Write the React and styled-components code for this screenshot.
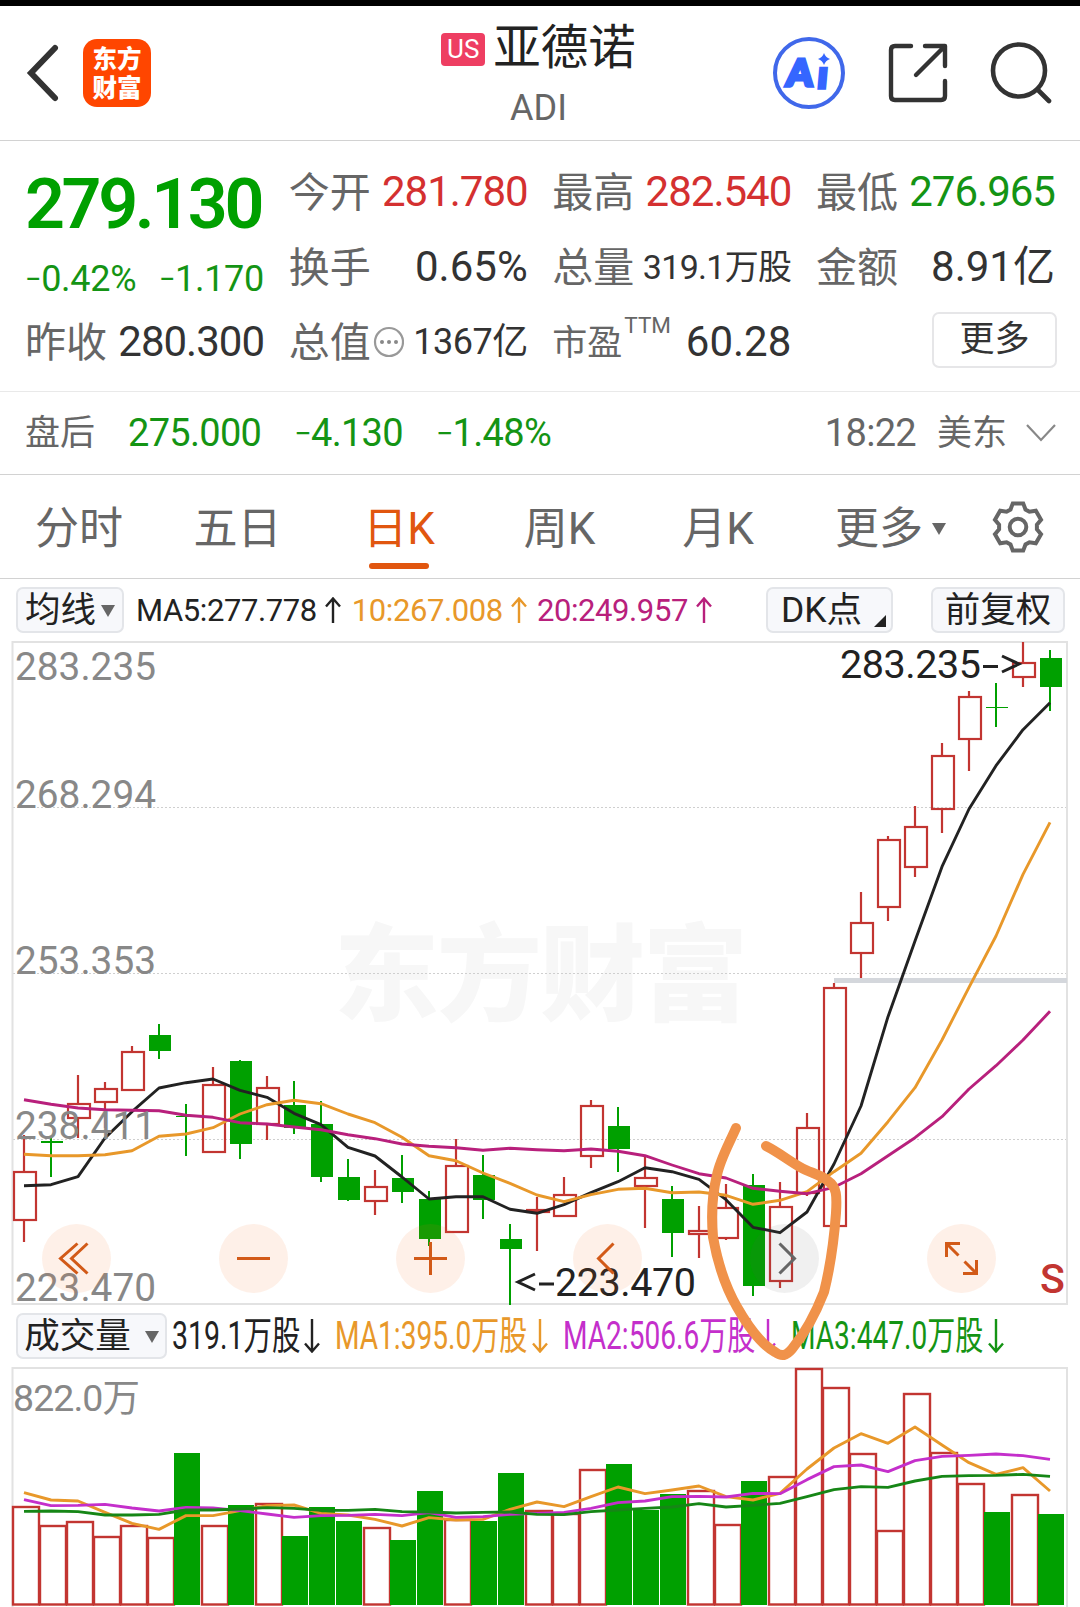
import React from 'react';
import styled, { createGlobalStyle } from 'styled-components';

const FONT = `Roboto, "Noto Sans CJK SC", sans-serif`;
const RED = '#c23531';
const GREEN = '#00a000';
const ORANGE = '#e8982a';
const MAGENTA = '#b8207c';
const PURPLE = '#c42fcb';

const GlobalStyle = createGlobalStyle`
    * { box-sizing: border-box; }
    body {
        margin: 0;
        background: #fff;
        overflow: hidden;
        font-family: ${FONT};
    }
    svg { display: block; flex: none; }
`;

const Page = styled.div`
    width: 1080px;
    height: 1607px;
    overflow: hidden;
    background: #fff;
    border-top: 6px solid #000;
    line-height: 1;
    white-space: nowrap;
`;

const Header = styled.header`
    height: 135px;
    border-bottom: 1px solid #d2d2d2;
    display: grid;
    grid-template-columns: 330px 1fr 330px;
`;

const HeaderLeft = styled.div`
    display: flex;
    align-items: center;
    padding-left: 23px;
    gap: 22px;
`;

const Logo = styled.div`
    width: 68px;
    height: 68px;
    border-radius: 14px;
    background: #ff4600;
    color: #fff;
    font: 900 24.5px/29px "Noto Sans CJK SC", sans-serif;
    text-align: center;
    padding-top: 4px;
`;

const HeaderTitle = styled.div`
    display: flex;
    flex-direction: column;
    align-items: center;
    padding: 19px 3px 0 0;
`;

const NameRow = styled.div`
    display: flex;
    align-items: center;
    gap: 8px;
    height: 48px;
    font-size: 47.5px;
    color: #222;
`;

const Market = styled.span`
    width: 44px;
    height: 33px;
    border-radius: 4px;
    background: #ee3e62;
    color: #fff;
    font-size: 26px;
    line-height: 33px;
    text-align: center;
`;

const Ticker = styled.div`
    margin-top: 17px;
    font-size: 36px;
    color: #666;
`;

const HeaderRight = styled.div`
    display: flex;
    align-items: center;
    justify-content: flex-end;
    padding-right: 28px;
    gap: 42px;
`;

const Quote = styled.section`
    height: 251px;
    padding: 13px 25px 0;
    border-bottom: 1px solid #e9e9e9;
    display: flex;
    justify-content: space-between;
`;

const QuoteColumn = styled.div`
    width: 239px;
`;

const Price = styled.div`
    height: 99px;
    display: flex;
    align-items: center;
    font-size: 70px;
    font-weight: 600;
    letter-spacing: -3.4px;
    color: ${GREEN};
`;

const Change = styled.div`
    height: 51px;
    display: flex;
    align-items: center;
    justify-content: space-between;
    font-size: 36px;
    letter-spacing: -0.3px;
    color: #149414;
`;

const Minus = styled.span`
    font-size: 0.8em;
    vertical-align: 0.06em;
`;

const Cell = styled.div`
    height: 75px;
    display: flex;
    align-items: center;
    justify-content: space-between;
`;

const Label = styled.span`
    display: flex;
    align-items: center;
    padding-top: 4px;
    font-size: ${props => props.$size || 41}px;
    color: #666;
`;

const Value = styled.span`
    font-size: ${props => props.$size || 42}px;
    letter-spacing: ${props => props.$spacing ?? -1}px;
    color: ${props => props.$color || '#333'};
`;

const Ttm = styled.sup`
    align-self: flex-start;
    font-size: 22.5px;
    line-height: 24px;
    margin: -13px 0 0 2px;
`;

const MoreButton = styled.button`
    width: 125px;
    height: 56px;
    margin: -4px -2px 0 auto;
    padding: 0;
    border: 2px solid #e6e6e8;
    border-radius: 7px;
    background: #fff;
    font: 35px/1 ${FONT};
    color: #333;
`;

const AfterHours = styled.section`
    height: 83px;
    padding: 0 24px 0 25px;
    border-bottom: 1px solid #d2d2d2;
    display: flex;
    align-items: center;
    font-size: 38px;
    letter-spacing: -0.7px;
    color: #149414;
`;

const Figure = styled.span`
    margin-left: 33px;
`;

const Muted = styled.span`
    font-size: 35px;
    letter-spacing: 0;
    color: #666;
`;

const Clock = styled.span`
    margin: 0 21px 0 auto;
    color: #666;
`;

const Tabs = styled.nav`
    height: 104px;
    border-bottom: 1px solid #d2d2d2;
    display: grid;
    grid-template-columns: 158px 159px 164px 157px 160px 193px 1fr;
`;

const Tab = styled.div`
    display: flex;
    flex-direction: column;
    align-items: center;
    padding-top: 32px;
    font-size: 44px;
    color: ${props => props.$active ? '#e1560f' : '#666'};
    &::after {
        content: '';
        width: 60px;
        height: 6px;
        margin-top: 12px;
        border-radius: 3px;
        background: ${props => props.$active ? '#e1560f' : 'transparent'};
    }
`;

const TabInner = styled.span`
    display: flex;
    align-items: center;
    gap: 9px;
    margin-left: -8px;
`;

const Triangle = styled.i`
    border: solid transparent;
    border-width: 12px 7.5px 0;
    border-top-color: #666;
`;

const IndicatorBar = styled.div`
    height: 62px;
    padding: 0 15px 0 16px;
    display: flex;
    align-items: center;
`;

const Chip = styled.button`
    position: relative;
    width: ${props => props.$width}px;
    height: 46px;
    padding: 2px ${props => props.$corner ? 16 : 0}px 0 0;
    border: 2px solid #e3e5e9;
    border-radius: 7px;
    background: #f7f8fb;
    display: flex;
    align-items: center;
    justify-content: center;
    gap: ${props => props.$gap || 5}px;
    flex: none;
    font: 35.5px/1 ${FONT};
    color: #222;
    &:nth-last-of-type(2) {
        margin-left: auto;
        margin-right: 38px;
    }
`;

const Corner = styled.i`
    position: absolute;
    right: 5px;
    bottom: 4px;
    width: 12px;
    height: 12px;
    background: #222;
    clip-path: polygon(100% 0, 100% 100%, 0 100%);
`;

const Legend = styled.span`
    display: flex;
    align-items: center;
    gap: 8px;
    margin-left: ${props => props.$left}px;
    font-size: 31px;
    letter-spacing: -0.4px;
    color: ${props => props.$color};
`;

const ChartArea = styled.div`
    position: relative;
`;

const Controls = styled.div`
    position: absolute;
    left: 42px;
    top: 583px;
    display: flex;
    gap: 108px;
`;

const Control = styled.button`
    width: 69px;
    height: 69px;
    padding: 0;
    border: 0;
    border-radius: 50%;
    background: ${props => props.$muted ? 'rgba(90, 90, 90, .09)' : 'rgba(250, 105, 30, .1)'};
    color: ${props => props.$muted ? '#666' : '#d25a18'};
`;

const VolumeBar = styled.div`
    height: 62px;
    padding: 0 0 0 16px;
    display: flex;
    align-items: center;
`;

const VolumeLegend = styled.span`
    display: flex;
    align-items: center;
    justify-content: space-between;
    width: ${props => props.$width}px;
    margin-left: ${props => props.$left}px;
    color: ${props => props.$color};
`;

// the legend has to fit four figures on one line, so its glyphs are narrowed
const Narrow = styled.span`
    width: 0;
    font-size: 39px;
    transform: scaleX(${props => props.$scale});
    transform-origin: left;
`;

const Annotation = styled.svg`
    position: absolute;
    left: 0;
    top: 0;
    pointer-events: none;
`;

const STEP = 27;
const FIRST = 24;
const TOP = 642;

// [up, high, body top, body bottom, low]
const candles = [
    [1, 1135, 1172, 1220, 1242], [0, 1137, 1141, 1143, 1177], [1, 1075, 1104, 1118, 1138],
    [1, 1082, 1089, 1102, 1128], [1, 1046, 1052, 1090, 1090], [0, 1024, 1035, 1051, 1059],
    [0, 1104, 1116, 1117, 1156], [1, 1067, 1085, 1152, 1152], [0, 1060, 1061, 1144, 1159],
    [1, 1076, 1088, 1124, 1140], [0, 1081, 1105, 1128, 1134], [0, 1101, 1124, 1177, 1182],
    [0, 1159, 1177, 1200, 1201], [1, 1170, 1187, 1201, 1215], [0, 1155, 1178, 1192, 1203],
    [0, 1191, 1199, 1239, 1246], [1, 1139, 1166, 1232, 1232], [0, 1155, 1175, 1200, 1219],
    [0, 1224, 1239, 1249, 1305], [1, 1197, 1210, 1212, 1251], [1, 1177, 1195, 1216, 1216],
    [1, 1100, 1106, 1156, 1168], [0, 1107, 1126, 1149, 1172], [1, 1156, 1178, 1186, 1228],
    [0, 1186, 1199, 1233, 1257], [1, 1206, 1231, 1234, 1258], [1, 1184, 1208, 1238, 1240],
    [0, 1174, 1185, 1286, 1296], [1, 1182, 1207, 1281, 1288], [1, 1113, 1128, 1193, 1196],
    [1, 983, 988, 1226, 1226], [1, 892, 923, 953, 978], [1, 836, 840, 907, 921],
    [1, 806, 827, 867, 877], [1, 743, 756, 809, 833], [1, 691, 697, 739, 771],
    [0, 683, 707, 708, 727], [1, 642, 663, 677, 687], [0, 650, 658, 687, 711],
];

const ma5 = [1185.7, 1184.7, 1176.7, 1138, 1111.7, 1088, 1082.7, 1079, 1090.3, 1097.3, 1113.3, 1124.7, 1147.3,
    1156, 1177, 1199, 1196.7, 1196.7, 1209.3, 1213.3, 1204.7, 1192.7, 1181.7, 1167.7, 1171.7, 1179.3,
    1199.7, 1227.3, 1232.7, 1212, 1164, 1106, 1016.7, 941, 866.7, 809, 765.7, 729.7, 702.7];
const ma10 = [1154.3, 1155.7, 1155.7, 1154.7, 1150.7, 1136.3, 1134, 1127.7, 1114, 1104.7, 1100.3, 1103.7, 1114,
    1122.7, 1137.3, 1155.7, 1160.7, 1173, 1183.3, 1195, 1201.7, 1194.7, 1189.3, 1188.3, 1192.7, 1192,
    1195.3, 1204.3, 1200.3, 1191.7, 1171.7, 1153.3, 1121.7, 1087.7, 1040, 987.3, 936, 874.3, 822.3];
const ma20 = [1099.7, 1104.3, 1108, 1109.7, 1110.3, 1110.7, 1115.3, 1117.3, 1122.7, 1124, 1127, 1129.7, 1134.7,
    1138.7, 1144, 1146.3, 1147.7, 1150.3, 1148.3, 1149.7, 1150.7, 1149, 1151.3, 1155.7, 1165, 1173.7,
    1178, 1188.3, 1191.3, 1193.7, 1187.3, 1173.7, 1155.7, 1137.7, 1116.7, 1089, 1065.7, 1040, 1011.3];

// [up, top]
const volumes = [
    [1, 1507], [1, 1526], [1, 1522], [1, 1537], [1, 1526], [1, 1538], [0, 1453], [1, 1526], [0, 1505],
    [1, 1504], [0, 1536], [0, 1507], [0, 1521], [1, 1528], [0, 1540], [0, 1491], [1, 1520], [0, 1521],
    [0, 1473], [1, 1511], [1, 1514], [1, 1470], [0, 1464], [0, 1510], [0, 1494], [1, 1491], [1, 1525],
    [0, 1481], [1, 1477], [1, 1369], [1, 1388], [1, 1454], [1, 1531], [1, 1394], [1, 1453], [1, 1484],
    [0, 1512], [1, 1495], [0, 1514],
];

const volMa1 = [578, 600, 603, 637, 670, 688, 647, 647, 632, 617, 615, 640, 645, 658, 678, 653, 660, 658, 628,
    606, 620, 590, 561, 581, 570, 558, 590, 600, 580, 507, 444, 401, 430, 381, 435, 488, 523, 503, 573];
const volMa2 = [599, 617, 616, 613, 624, 633, 622, 624, 632, 642, 652, 647, 646, 643, 647, 638, 652, 650, 643,
    640, 637, 625, 608, 603, 590, 589, 591, 580, 581, 539, 500, 495, 515, 482, 469, 466, 462, 467, 478];
const volMa3 = [634, 633, 635, 645, 645, 643, 630, 630, 627, 623, 625, 631, 631, 628, 635, 636, 639, 637, 636,
    643, 644, 635, 630, 625, 621, 611, 621, 616, 610, 590, 569, 560, 562, 543, 529, 527, 526, 523, 529];

const toLine = values => values.map((y, i) => `${FIRST + i * STEP},${y}`).join(' ');
const toVolumeLine = values => toLine(values.map(v => 1300 + v / 3));

const Line = ({ points, color }) => (
    <polyline points={points} fill="none" stroke={color} strokeWidth="2.9" strokeLinejoin="round" />
);

const Candle = ({ index, data }) => {
    const [up, high, top, bottom, low] = data;
    const x = FIRST + index * STEP;
    if (!up) {
        return (
            <g fill={GREEN}>
                <rect x={x - 1} y={high} width="2" height={low - high} />
                <rect x={x - 10} y={top} width="22" height={bottom - top} />
            </g>
        );
    }
    return (
        <g stroke={RED} strokeWidth="2.2" fill="none">
            <path d={`M${x} ${high}V${top}M${x} ${bottom}V${low}`} />
            <rect x={x - 10} y={top} width="22" height={bottom - top} />
        </g>
    );
};

const axis = [['283.235', 680], ['268.294', 808], ['253.353', 974], ['238.411', 1139], ['223.470', 1301]];

const PriceChart = () => (
    <svg width="1080" height="664" viewBox={`0 ${TOP - 1} 1080 664`}>
        <text x="334" y="1012" fontSize="105" fontWeight="900" fill="#f7f7f7" textLength="414"
            fontFamily="Noto Sans CJK SC">东方财富</text>
        <g stroke="#cfcfcf" strokeDasharray="2 2">
            <path d="M13 807.5H1067M13 973.5H1067M13 1139.5H1067" />
        </g>
        <rect x="12.5" y="642" width="1054.5" height="662" fill="none" stroke="#e2e2e2" strokeWidth="2" />
        <rect x="834" y="978" width="233" height="5" fill="#d4d7dc" />
        {candles.map((c, i) => <Candle key={i} index={i} data={c} />)}
        <Line points={toLine(ma5)} color="#222" />
        <Line points={toLine(ma10)} color={ORANGE} />
        <Line points={toLine(ma20)} color={MAGENTA} />
        <g fontSize="39.5" fill="#888">
            {axis.map(([text, y]) => (
                <text key={text} x="15" y={y} textLength="141" lengthAdjust="spacingAndGlyphs">{text}</text>
            ))}
        </g>
        <g fontSize="39.5" fill="#222">
            <text x="840" y="678" textLength="141">283.235</text>
            <text x="555" y="1296" textLength="141">223.470</text>
        </g>
        <g stroke="#222" strokeWidth="3" fill="none">
            <path d="M983 666.5H998M1002 656L1019 664L1002 672" />
            <path d="M554 1284H539M535 1274L518 1282L535 1290" />
        </g>
        <text x="1040" y="1292.5" fontSize="41" fontWeight="500" fill={RED}>S</text>
    </svg>
);

const VolumeChart = () => (
    <svg width="1080" height="240" viewBox="0 1367 1080 240">
        <path d="M12.5 1607V1368H1067V1607" fill="none" stroke="#e2e2e2" strokeWidth="2" />
        <text x="13" y="1411" fontSize="37.5" fill="#888" textLength="127">822.0万</text>
        {volumes.map(([up, top], i) => (up
            ? <rect key={i} x={13 + i * STEP} y={top} width="26" height={1604.5 - top} fill="none" stroke={RED} strokeWidth="2.4" />
            : <rect key={i} x={12 + i * STEP} y={top} width="26" height={1605 - top} fill={GREEN} />
        ))}
        <Line points={toVolumeLine(volMa1)} color={ORANGE} />
        <Line points={toVolumeLine(volMa2)} color={PURPLE} />
        <Line points={toVolumeLine(volMa3)} color="#168616" />
    </svg>
);

const Arrow = ({ down, h = 26 }) => (
    <svg width="16" height={h} viewBox={`0 0 16 ${h}`} fill="none" stroke="currentColor" strokeWidth="2.4"
        transform={down ? 'rotate(180)' : undefined}>
        <path d={`M8 ${h}V1.5M1 9.5L8 1.5L15 9.5`} />
    </svg>
);

const controls = [
    'M1 -15L-16 0L1 15M11 -15L-5 0L11 15',
    'M-16.5 0H16.5',
    'M-16.5 0H16.5M0 -16.5V16.5',
    'M6 -15L-9 0L6 15',
    'M-5 -15L10 0L-5 15',
    'M-1.5 -15H-15V-1.5M-15 -15L-3 -3M15 1.5V15H1.5M3 3L15 15',
];

const gearPoints = [0, 60, 120, 180, 240, 300].flatMap(deg => {
    const a = deg * Math.PI / 180;
    return [[-7.5, -17.5], [-5.2, -23.6], [5.2, -23.6], [7.5, -17.5]].map(([x, y]) =>
        `${(x * Math.cos(a) - y * Math.sin(a)).toFixed(2)},${(x * Math.sin(a) + y * Math.cos(a)).toFixed(2)}`);
}).join(' ');

const App = () => (
    <Page>
        <GlobalStyle />
        <Header>
            <HeaderLeft>
                <svg width="38" height="60" viewBox="0 0 38 60" fill="none" stroke="#333" strokeWidth="6" strokeLinecap="round">
                    <path d="M32 5L8 30L32 55" />
                </svg>
                <Logo>东方<br />财富</Logo>
            </HeaderLeft>
            <HeaderTitle>
                <NameRow><Market>US</Market>亚德诺</NameRow>
                <Ticker>ADI</Ticker>
            </HeaderTitle>
            <HeaderRight>
                <svg width="74" height="74" viewBox="-37 -37 74 74">
                    <circle r="34" fill="none" stroke="#4068ea" strokeWidth="4" />
                    <g fill="#3566ff" fontFamily="Lato" fontWeight="900" stroke="#3566ff" strokeWidth="3.5" transform="skewX(-5)">
                        <text x="-22" y="13" fontSize="37">A</text>
                        <text x="9" y="15" fontSize="38">ı</text>
                    </g>
                    <path d="M15 -20Q16.5 -15.5 21 -14Q16.5 -12.5 15 -8Q13.5 -12.5 9 -14Q13.5 -15.5 15 -20Z" fill="#3566ff" />
                </svg>
                <svg width="60" height="60" viewBox="0 0 60 60" fill="none" stroke="#333" strokeWidth="4.4" strokeLinecap="round" strokeLinejoin="round">
                    <path d="M23 3H7Q3 3 3 7V53Q3 57 7 57H53Q57 57 57 53V38M37 3H57V23M28 32L56 4" />
                </svg>
                <svg width="62" height="62" viewBox="0 0 62 62" fill="none" stroke="#333" strokeWidth="4.6" strokeLinecap="round">
                    <circle cx="29" cy="28.5" r="26" />
                    <path d="M47.5 47.5L59 59" />
                </svg>
            </HeaderRight>
        </Header>

        <Quote>
            <QuoteColumn>
                <Price>279.130</Price>
                <Change>
                    <span><Minus>−</Minus>0.42%</span>
                    <span><Minus>−</Minus>1.170</span>
                </Change>
                <Cell><Label>昨收</Label><Value>280.300</Value></Cell>
            </QuoteColumn>
            <QuoteColumn>
                <Cell><Label>今开</Label><Value $color="#d43030">281.780</Value></Cell>
                <Cell><Label>换手</Label><Value $spacing={0}>0.65%</Value></Cell>
                <Cell>
                    <Label>
                        总值
                        <svg width="33" height="36" viewBox="-18 -16 33 36">
                            <circle r="14" fill="none" stroke="#999" strokeWidth="2.2" />
                            <g fill="#888"><circle cx="-7" r="2" /><circle r="2" /><circle cx="7" r="2" /></g>
                        </svg>
                    </Label>
                    <Value $size={36} $spacing={-0.5}>1367亿</Value>
                </Cell>
            </QuoteColumn>
            <QuoteColumn>
                <Cell><Label>最高</Label><Value $color="#d43030">282.540</Value></Cell>
                <Cell><Label>总量</Label><Value $size={34} $spacing={-0.7}>319.1万股</Value></Cell>
                <Cell><Label $size="35">市盈<Ttm>TTM</Ttm></Label><Value $spacing={0}>60.28</Value></Cell>
            </QuoteColumn>
            <QuoteColumn>
                <Cell><Label>最低</Label><Value $color="#149414">276.965</Value></Cell>
                <Cell><Label>金额</Label><Value $spacing={0}>8.91亿</Value></Cell>
                <Cell><MoreButton>更多</MoreButton></Cell>
            </QuoteColumn>
        </Quote>

        <AfterHours>
            <Muted>盘后</Muted>
            <Figure>275.000</Figure>
            <Figure><Minus>−</Minus>4.130</Figure>
            <Figure><Minus>−</Minus>1.48%</Figure>
            <Clock>18:22</Clock>
            <Muted>美东</Muted>
            <svg width="30" height="18" viewBox="0 0 30 18" fill="none" stroke="#888" strokeWidth="2.2" style={{ marginLeft: 19 }}>
                <path d="M1 1L15 16L29 1" />
            </svg>
        </AfterHours>

        <Tabs>
            <Tab>分时</Tab>
            <Tab>五日</Tab>
            <Tab $active>日K</Tab>
            <Tab>周K</Tab>
            <Tab>月K</Tab>
            <Tab><TabInner>更多<Triangle /></TabInner></Tab>
            <svg width="54" height="104" viewBox="-27 -52 54 104" fill="none" stroke="#666" strokeWidth="4">
                <polygon points={gearPoints} />
                <circle r="8.3" />
            </svg>
        </Tabs>

        <IndicatorBar>
            <Chip $width={108}>均线<Triangle /></Chip>
            <Legend $left={12} $color="#222">MA5:277.778<Arrow /></Legend>
            <Legend $left={11} $color={ORANGE}>10:267.008<Arrow /></Legend>
            <Legend $left={10} $color={MAGENTA}>20:249.957<Arrow /></Legend>
            <Chip $width={127} $corner>DK点<Corner /></Chip>
            <Chip $width={134}>前复权</Chip>
        </IndicatorBar>

        <ChartArea>
            <PriceChart />
            <Controls>
                {controls.map((d, i) => (
                    <Control key={d} $muted={i === 4}>
                        <svg width="69" height="69" viewBox="-34.5 -34.5 69 69" fill="none" stroke="currentColor" strokeWidth="3">
                            <path d={d} />
                        </svg>
                    </Control>
                ))}
            </Controls>
            <VolumeBar>
                <Chip $width={151} $gap={14}>成交量<Triangle /></Chip>
                <VolumeLegend $left={5} $width={148} $color="#222"><Narrow $scale={0.73}>319.1万股</Narrow><Arrow down h={34} /></VolumeLegend>
                <VolumeLegend $left={15} $width={213} $color={ORANGE}><Narrow $scale={0.72}>MA1:395.0万股</Narrow><Arrow down h={34} /></VolumeLegend>
                <VolumeLegend $left={15} $width={213} $color={PURPLE}><Narrow $scale={0.72}>MA2:506.6万股</Narrow><Arrow down h={34} /></VolumeLegend>
                <VolumeLegend $left={15} $width={213} $color="#149414"><Narrow $scale={0.72}>MA3:447.0万股</Narrow><Arrow down h={34} /></VolumeLegend>
            </VolumeBar>
            <VolumeChart />
            <Annotation width="1080" height="740" viewBox={`0 ${TOP - 1} 1080 740`} fill="none" stroke="#f0924a"
                strokeWidth="10" strokeLinecap="round" strokeLinejoin="round">
                <path d="M736 1128C728 1146 720 1160 717 1175C712 1195 711 1215 713 1237C718 1265 726 1288 737 1307C749 1328 762 1345 775 1352C782 1357 786 1356 792 1349C806 1332 817 1310 824 1292C830 1268 834 1240 836 1213C837 1196 837 1187 828 1181C820 1174 810 1173 800 1167C788 1160 778 1152 766 1146" />
            </Annotation>
        </ChartArea>
    </Page>
);

export default App;
